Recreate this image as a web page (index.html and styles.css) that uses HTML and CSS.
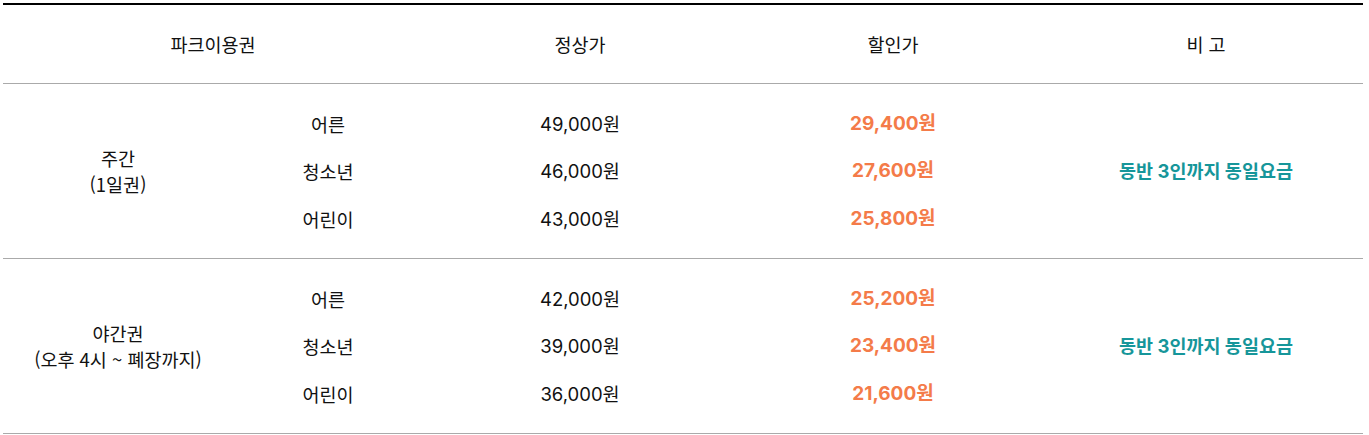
FILE: index.html
```html
<!DOCTYPE html>
<html lang="ko">
<head>
  <meta charset="UTF-8">
  <meta name="viewport" content="width=device-width, initial-scale=1">
  <title>파크이용권 요금표</title>
  <link rel="stylesheet" href="styles.css">
</head>
<body>

<div class="wrap">
  <table class="price-table">
    <colgroup>
      <col class="c-type">
      <col class="c-age">
      <col class="c-price">
      <col class="c-sale">
      <col class="c-note">
    </colgroup>
    <thead>
      <tr>
        <th colspan="2">파크이용권</th>
        <th>정상가</th>
        <th>할인가</th>
        <th>비 고</th>
      </tr>
    </thead>
    <!-- 주간권 -->
    <tbody>
      <tr class="first">
        <td rowspan="3" class="type">주간<br>(1일권)</td>
        <td class="age">어른</td>
        <td class="num">49,000원</td>
        <td class="num sale">29,400원</td>
        <td rowspan="3" class="note">동반 3인까지 동일요금</td>
      </tr>
      <tr>
        <td class="age">청소년</td>
        <td class="num">46,000원</td>
        <td class="num sale">27,600원</td>
      </tr>
      <tr class="last">
        <td class="age">어린이</td>
        <td class="num">43,000원</td>
        <td class="num sale">25,800원</td>
      </tr>
    </tbody>
    <!-- 야간권 -->
    <tbody>
      <tr class="first">
        <td rowspan="3" class="type">야간권<br>(오후 4시 ~ 폐장까지)</td>
        <td class="age">어른</td>
        <td class="num">42,000원</td>
        <td class="num sale">25,200원</td>
        <td rowspan="3" class="note">동반 3인까지 동일요금</td>
      </tr>
      <tr>
        <td class="age">청소년</td>
        <td class="num">39,000원</td>
        <td class="num sale">23,400원</td>
      </tr>
      <tr class="last">
        <td class="age">어린이</td>
        <td class="num">36,000원</td>
        <td class="num sale">21,600원</td>
      </tr>
    </tbody>
  </table>
</div>

</body>
</html>
```

FILE: styles.css
```css
body {
  margin: 0;
  background: #fff;
  font-family: "Inter", "Noto Sans CJK KR", sans-serif;
  color: #111;
}
.wrap {
  padding: 3px 6px 0 3px;
}
.price-table {
  width: 1360px;
  border-collapse: collapse;
  table-layout: fixed;
  border-top: 2px solid #000;
}
.c-type { width: 230px; }
.c-age { width: 190px; }
.c-price { width: 314px; }
.c-sale { width: 312px; }
.c-note { width: 314px; }
.price-table th {
  height: 78px;
  padding: 0;
  font-family: "Noto Sans CJK KR", sans-serif;
  font-weight: 400;
  font-size: 18.5px;
  color: #111;
  border-bottom: 1px solid #aaa;
}
.price-table td {
  height: 48px;
  padding: 0;
  text-align: center;
  font-size: 19px;
  line-height: 24px;
}
.price-table tbody {
  border-bottom: 1px solid #aaa;
}
.price-table tr.first td,
.price-table tr.last td {
  height: 47px;
}
.price-table tr.first td {
  padding-top: 16px;
}
.price-table tr.last td {
  padding-bottom: 16px;
}
.price-table tr.first td.type,
.price-table tr.first td.note {
  padding: 0;
}
.price-table td.type {
  line-height: 26px;
  font-family: "Noto Sans CJK KR", sans-serif;
  font-size: 18.5px;
}
.price-table td.age {
  font-family: "Noto Sans CJK KR", sans-serif;
  font-size: 18.5px;
}
.price-table td.num {
  font-size: 18.5px;
}
.price-table td.sale {
  color: #f47b49;
  font-weight: 700;
  font-size: 19px;
}
.price-table td.note {
  color: #16969a;
  font-weight: 700;
  font-size: 18.5px;
}
```
